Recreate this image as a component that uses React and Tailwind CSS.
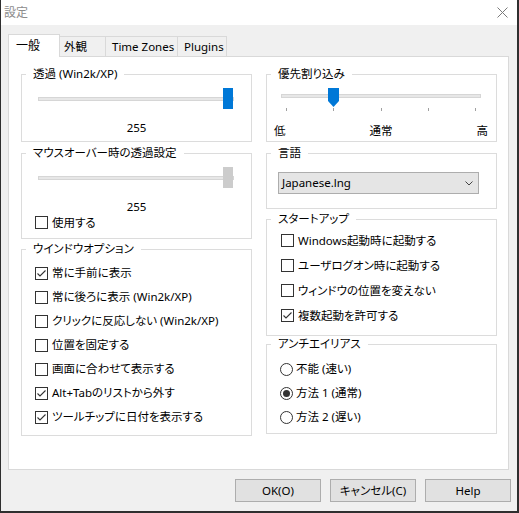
import React from "react";

const font =
  "font-['Noto_Sans','Noto_Sans_CJK_JP',sans-serif] [font-feature-settings:'palt']";

const Check = ({ checked, label, h = "h-[24px]" }) => (
  <label className={`flex ${h} items-center`}>
    <span className="flex h-[13px] w-[13px] shrink-0 items-center justify-center border border-[#333333] bg-white">
      {checked && (
        <svg width="11" height="11" viewBox="0 0 11 11">
          <path
            d="M1.5 5.5 L4 8 L9.5 2.5"
            fill="none"
            stroke="#333333"
            strokeWidth="1.1"
          />
        </svg>
      )}
    </span>
    <span className="ml-[4px] whitespace-nowrap leading-[16px]">{label}</span>
  </label>
);

const Radio = ({ checked, label }) => (
  <label className="flex h-[24px] items-center">
    <span className="flex h-[13px] w-[13px] shrink-0 items-center justify-center rounded-full border border-[#333333] bg-white">
      {checked && <span className="h-[7px] w-[7px] rounded-full bg-[#333333]" />}
    </span>
    <span className="ml-[3px] whitespace-nowrap leading-[16px]">{label}</span>
  </label>
);

const Group = ({ title, className = "", children }) => (
  <fieldset className={`border border-[#dcdcdc] ${className}`}>
    <legend className="ml-[4px] px-[7px] leading-[16px]">{title}</legend>
    {children}
  </fieldset>
);

const Slider = ({ thumb }) => (
  <div className="relative ml-[16px] mt-[6px] h-[21px] w-[196px]">
    <div className="absolute left-0 right-0 top-[9px] h-[4px] border border-[#d6d6d6] bg-[#e7e7e7]" />
    <div className={`absolute left-[185px] top-0 h-[21px] w-[10px] ${thumb}`} />
  </div>
);

const App = () => {
  const tabs = [
    { name: "外観", w: "w-[46px]", pl: "pl-[4px]" },
    { name: "Time Zones", w: "w-[72px]", pl: "pl-[6px]" },
    { name: "Plugins", w: "w-[49px]", pl: "pl-[6px]" },
  ];

  return (
    <div
      className={`flex h-[513px] w-[519px] flex-col border-b-2 border-l border-r-2 border-[#2f2f2f] bg-[#f0f0f0] text-[11.5px] text-black ${font}`}
    >
      <div className="flex h-[25px] shrink-0 items-center justify-between bg-white pl-[3px] pr-[9px]">
        <span className="text-[12px] text-[#8c8c8c]">設定</span>
        <svg width="11" height="11" viewBox="0 0 11 11">
          <path d="M0.5 0.5 L10.5 10.5 M10.5 0.5 L0.5 10.5" stroke="#7a7a7a" strokeWidth="1" />
        </svg>
      </div>

      <div className="flex flex-1 flex-col pl-[7px] pr-[8px] pt-[9px]">
        <div className="flex h-[23px] items-end">
          <div className="relative z-10 flex h-[23px] w-[52px] items-center border border-b-0 border-[#d9d9d9] bg-white pb-[1px] pl-[7px] text-[12px]">
            一般
          </div>
          {tabs.map((t) => (
            <div
              key={t.name}
              className={`mb-px flex h-[20px] items-center border-r border-t border-[#d9d9d9] ${t.w} ${t.pl} whitespace-nowrap pt-[1px]`}
            >
              {t.name}
            </div>
          ))}
        </div>

        <div className="-mt-px flex h-[414px] gap-[14px] border border-[#d9d9d9] bg-white pl-[12px] pt-[9px]">
          <div className="flex w-[231px] flex-col">
            <Group title="透過 (Win2k/XP)" className="pb-[5px]">
              <Slider thumb="bg-[#0078d7]" />
              <div className="mt-[11px] text-center leading-[16px]">255</div>
            </Group>

            <Group title="マウスオーバー時の透過設定" className="mt-[3px] pb-[8px]">
              <Slider thumb="bg-[#cccccc]" />
              <div className="mt-[11px] text-center leading-[16px]">255</div>
              <div className="pl-[13px]">
                <Check label="使用する" h="h-[15px]" />
              </div>
            </Group>

            <Group title="ウインドウオプション" className="mt-[2px] pb-[6px]">
              <div className="pl-[13px] pt-[4px]">
                <Check checked label="常に手前に表示" />
                <Check label="常に後ろに表示 (Win2k/XP)" />
                <Check label="クリックに反応しない (Win2k/XP)" />
                <Check label="位置を固定する" />
                <Check label="画面に合わせて表示する" />
                <Check checked label="Alt+Tabのリストから外す" />
                <Check checked label="ツールチップに日付を表示する" />
              </div>
            </Group>
          </div>

          <div className="flex w-[231px] flex-col">
            <Group title="優先割り込み" className="pb-[2px]">
              <div className="relative ml-[14px] mt-[6px] h-[19px] w-[200px]">
                <div className="absolute left-0 right-0 top-[6px] h-[4px] border border-[#d6d6d6] bg-[#e7e7e7]" />
                <svg
                  className="absolute left-[47px] top-0"
                  width="11"
                  height="19"
                  viewBox="0 0 11 19"
                >
                  <path d="M0 0 H11 V13 L5.5 19 L0 13 Z" fill="#0078d7" />
                </svg>
              </div>
              <div className="ml-[14px] mt-[1px] flex h-[3px] w-[200px] justify-between px-[5px]">
                {[0, 1, 2, 3, 4].map((i) => (
                  <span key={i} className="h-[3px] w-px bg-[#a0a0a0]" />
                ))}
              </div>
              <div className="mt-[12px] flex justify-between pl-[7px] pr-[8px] leading-[16px]">
                <span>低</span>
                <span>通常</span>
                <span>高</span>
              </div>
            </Group>

            <Group title="言語" className="mt-[3px] pb-[14px]">
              <div className="ml-[11px] mt-[11px] flex h-[22px] w-[201px] items-center justify-between border border-[#adadad] bg-[#e5e5e5] pl-[3px] pr-[5px]">
                <span className="leading-[16px]">Japanese.lng</span>
                <svg width="8" height="5" viewBox="0 0 8 5">
                  <path d="M0.5 0.5 L4 4 L7.5 0.5" fill="none" stroke="#444444" strokeWidth="1" />
                </svg>
              </div>
            </Group>

            <Group title="スタートアップ" className="mt-[2px] pb-[7px]">
              <div className="pl-[14px] pt-[1px]">
                <Check label="Windows起動時に起動する" h="h-[25px]" />
                <Check label="ユーザログオン時に起動する" h="h-[25px]" />
                <Check label="ウィンドウの位置を変えない" h="h-[25px]" />
                <Check checked label="複数起動を許可する" h="h-[25px]" />
              </div>
            </Group>

            <Group title="アンチエイリアス" className="pb-[4px]">
              <div className="pl-[13px] pt-[5px]">
                <Radio label="不能 (速い)" />
                <Radio checked label="方法 1 (通常)" />
                <Radio label="方法 2 (遅い)" />
              </div>
            </Group>
          </div>
        </div>

        <div className="-mr-[2px] mt-[9px] flex justify-end gap-[9px]">
          {["OK(O)", "キャンセル(C)", "Help"].map((b) => (
            <button
              key={b}
              className="flex h-[23px] w-[86px] items-center justify-center border border-[#adadad] bg-[#e1e1e1] leading-[16px]"
            >
              {b}
            </button>
          ))}
        </div>
      </div>
    </div>
  );
};

export default App;
